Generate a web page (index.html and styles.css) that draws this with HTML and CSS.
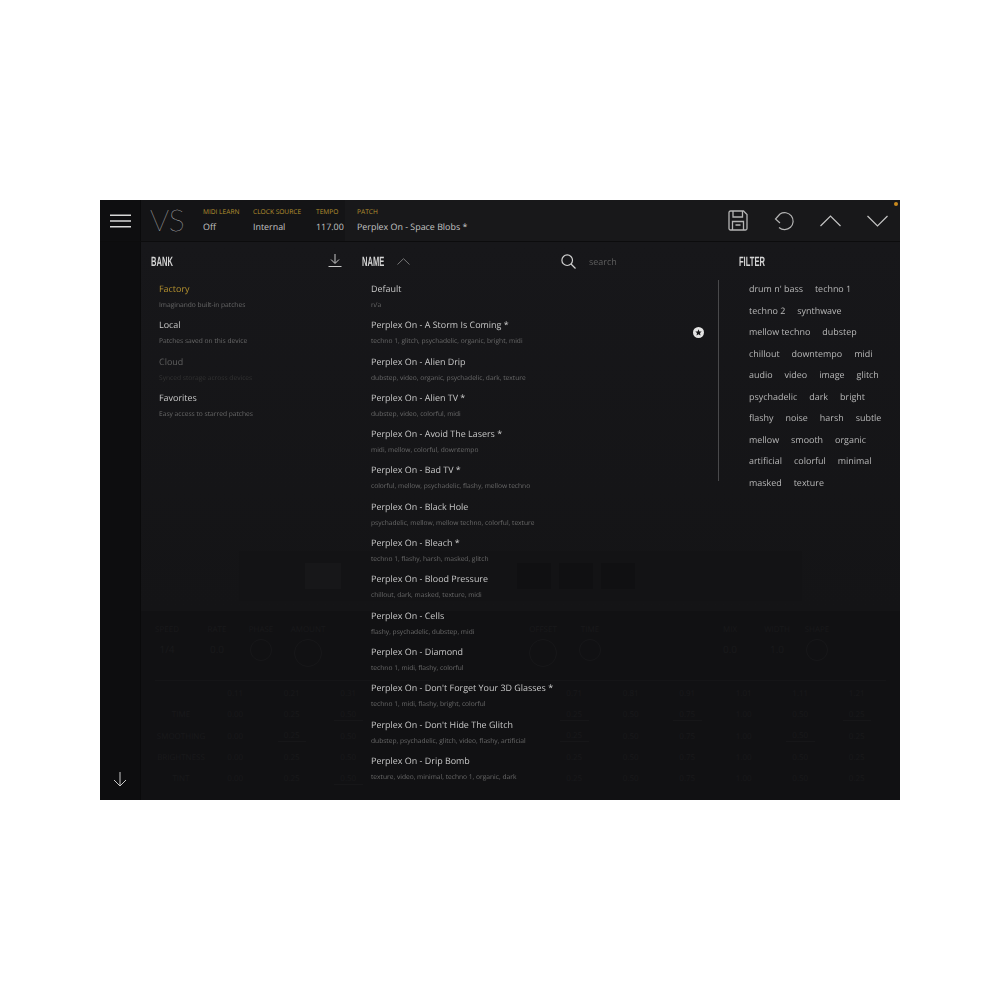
FILE: index.html
```html
<!DOCTYPE html>
<html lang="en">
<head>
    <meta charset="UTF-8">
    <title>VS Patch Browser</title>
    <link rel="stylesheet" href="styles.css">
</head>

<body>
    <div class="app">
        <header class="topbar">
            <div class="menu-btn">
                <svg width="21" height="14" viewBox="0 0 21 14"><path d="M0 1.200H21M0 7H21M0 12.800H21" stroke="#d8d8d8" stroke-width="1.500" fill="none"/></svg>
            </div>
            <div class="logo">VS</div>
            <div class="field field-midi"><span class="field-label">MIDI LEARN</span><span class="field-value">Off</span></div>
            <div class="field field-clock"><span class="field-label">CLOCK SOURCE</span><span class="field-value">Internal</span></div>
            <div class="field field-tempo"><span class="field-label">TEMPO</span><span class="field-value">117.00</span></div>
            <div class="field field-patch"><span class="field-label">PATCH</span><span class="field-value">Perplex On - Space Blobs *</span></div>
            <div class="actions">
                <svg width="20" height="21" viewBox="0 0 20 21" fill="none" stroke="#b4b4b4" stroke-width="1.300"><path d="M2.500 1H15.500L19 4.500V18.500A1.500 1.500 0 0 1 17.500 20H2.500A1.500 1.500 0 0 1 1 18.500V2.500A1.500 1.500 0 0 1 2.500 1Z"/><path d="M5 1V7H14.500V1M4.500 20V11.500H15.500V20M7.500 15H12.500"/></svg>
                <svg width="20" height="20" viewBox="0 0 20 20" fill="none" stroke="#b4b4b4" stroke-width="1.200"><path d="M6 3A8.500 8.500 0 1 1 5 16.500M6 3L1.500 8L6 12"/></svg>
                <svg width="21" height="12" viewBox="0 0 21 12" fill="none" stroke="#c4c4c4" stroke-width="1.200"><path d="M.5 11L10.500 1L20.500 11"/></svg>
                <svg width="21" height="12" viewBox="0 0 21 12" fill="none" stroke="#c4c4c4" stroke-width="1.200"><path d="M.5 1L10.500 11L20.500 1"/></svg>
            </div>
            <span class="status-dot"></span>
        </header>

        <div class="content">
            <aside class="sidebar">
                <svg width="14" height="15" viewBox="0 0 14 15" fill="none" stroke="#c8c8c8" stroke-width="1"><path d="M7 0V14M1 8L7 14L13 8"/></svg>
            </aside>

            <!-- the editor behind the browser, barely showing through -->
            <div class="ghost">
                <div class="ghost-top">
                    <div class="ghost-toolbar">
                        <span class="ghost-box"></span><span class="ghost-box wide"></span><span class="ghost-box"></span>
                        <span class="ghost-box"></span><span class="ghost-box"></span><span class="ghost-box"></span>
                        <span class="ghost-box dark"></span><span class="ghost-box dark"></span>
                        <span class="ghost-box dark"></span><span class="ghost-box"></span>
                    </div>
                </div>
                <div class="ghost-bottom">
                    <div class="ghost-knobs">
                        <div class="ghost-knob"><span>SPEED</span><b>1/4</b></div>
                        <div class="ghost-knob"><span>RATE</span><b>0.0</b></div>
                        <div class="ghost-knob"><span>PHASE</span><i></i></div>
                        <div class="ghost-knob"><span>AMOUNT</span><i class="big"></i></div>
                        <div class="ghost-knob"><span>OFFSET</span><i class="big"></i></div>
                        <div class="ghost-knob"><span>TIME</span><i></i></div>
                        <div class="ghost-knob"><span>MIX</span><b>0.0</b></div>
                        <div class="ghost-knob"><span>WIDTH</span><b>1.0</b></div>
                        <div class="ghost-knob"><span>SHAPE</span><i></i></div>
                    </div>
                    <div class="ghost-table">
                        <span></span><span>0.11</span><span>0.21</span><span>0.31</span><span></span><span></span><span></span><span>0.71</span><span>0.81</span><span>0.91</span><span>1.01</span><span>1.11</span><span>1.21</span>
                        <span>TIME</span><span>0.00</span><span>0.25</span><span class="m">0.50</span><span></span><span></span><span></span><span class="m">0.25</span><span>0.50</span><span class="m">0.75</span><span>1.00</span><span>0.50</span><span class="m">0.25</span>
                        <span>SMOOTHING</span><span>0.00</span><span class="m">0.25</span><span>0.50</span><span></span><span></span><span></span><span class="m">0.25</span><span>0.50</span><span>0.75</span><span>1.00</span><span class="m">0.50</span><span>0.25</span>
                        <span>BRIGHTNESS</span><span>0.00</span><span>0.25</span><span>0.50</span><span></span><span></span><span></span><span>0.25</span><span>0.50</span><span>0.75</span><span>1.00</span><span>0.50</span><span>0.25</span>
                        <span>TINT</span><span>0.00</span><span>0.25</span><span class="m">0.50</span><span></span><span></span><span></span><span>0.25</span><span>0.50</span><span>0.75</span><span>1.00</span><span>0.50</span><span>0.25</span>
                    </div>
                </div>
            </div>

            <div class="browser">
                <section class="col-bank">
                    <div class="col-head">
                        <h2>BANK</h2>
                        <svg class="download" width="14" height="14" viewBox="0 0 14 14" fill="none" stroke="#c8c8c8" stroke-width="1"><path d="M7 0V9M3 5.500L7 9.500L11 5.500M.5 12.500H13.500"/></svg>
                    </div>
                    <ul class="list">
                        <li><span class="title active">Factory</span><span class="sub">Imaginando built-in patches</span></li>
                        <li><span class="title">Local</span><span class="sub">Patches saved on this device</span></li>
                        <li class="disabled"><span class="title">Cloud</span><span class="sub">Synced storage across devices</span></li>
                        <li><span class="title">Favorites</span><span class="sub">Easy access to starred patches</span></li>
                    </ul>
                </section>

                <section class="col-name">
                    <div class="col-head">
                        <h2>NAME</h2>
                        <svg class="sort" width="13" height="7" viewBox="0 0 13 7" fill="none" stroke="#777" stroke-width="1"><path d="M.5 6.500L6.500 .7L12.500 6.500"/></svg>
                        <svg class="search-icon" width="15" height="15" viewBox="0 0 15 15" fill="none" stroke="#d0d0d0" stroke-width="1.200"><circle cx="6.200" cy="6.200" r="5.300"/><path d="M10 10L14.500 14.500"/></svg>
                        <span class="search">search</span>
                    </div>
                    <ul class="list">
                        <li><span class="title">Default</span><span class="sub">n/a</span></li>
                        <li class="starred">
                            <span class="title">Perplex On - A Storm Is Coming *</span><span class="sub">techno 1, glitch, psychadelic, organic, bright, midi</span>
                            <svg class="star" width="11" height="11" viewBox="0 0 11 11"><circle cx="5.500" cy="5.500" r="5.500" fill="#e4e4e4"/><path d="M5.500 2.200L6.400 4.400L8.700 4.600L7 6.100L7.500 8.400L5.500 7.200L3.500 8.400L4 6.100L2.300 4.600L4.600 4.400Z" fill="#17171a"/></svg>
                        </li>
                        <li><span class="title">Perplex On - Alien Drip</span><span class="sub">dubstep, video, organic, psychadelic, dark, texture</span></li>
                        <li><span class="title">Perplex On - Alien TV *</span><span class="sub">dubstep, video, colorful, midi</span></li>
                        <li><span class="title">Perplex On - Avoid The Lasers *</span><span class="sub">midi, mellow, colorful, downtempo</span></li>
                        <li><span class="title">Perplex On - Bad TV *</span><span class="sub">colorful, mellow, psychadelic, flashy, mellow techno</span></li>
                        <li><span class="title">Perplex On - Black Hole</span><span class="sub">psychadelic, mellow, mellow techno, colorful, texture</span></li>
                        <li><span class="title">Perplex On - Bleach *</span><span class="sub">techno 1, flashy, harsh, masked, glitch</span></li>
                        <li><span class="title">Perplex On - Blood Pressure</span><span class="sub">chillout, dark, masked, texture, midi</span></li>
                        <li><span class="title">Perplex On - Cells</span><span class="sub">flashy, psychadelic, dubstep, midi</span></li>
                        <li><span class="title">Perplex On - Diamond</span><span class="sub">techno 1, midi, flashy, colorful</span></li>
                        <li><span class="title">Perplex On - Don't Forget Your 3D Glasses *</span><span class="sub">techno 1, midi, flashy, bright, colorful</span></li>
                        <li><span class="title">Perplex On - Don't Hide The Glitch</span><span class="sub">dubstep, psychadelic, glitch, video, flashy, artificial</span></li>
                        <li><span class="title">Perplex On - Drip Bomb</span><span class="sub">texture, video, minimal, techno 1, organic, dark</span></li>
                    </ul>
                </section>

                <section class="col-filter">
                    <div class="col-head"><h2>FILTER</h2></div>
                    <div class="tags">
                        <div class="tag-row"><span>drum n' bass</span><span>techno 1</span></div>
                        <div class="tag-row"><span>techno 2</span><span>synthwave</span></div>
                        <div class="tag-row"><span>mellow techno</span><span>dubstep</span></div>
                        <div class="tag-row"><span>chillout</span><span>downtempo</span><span>midi</span></div>
                        <div class="tag-row"><span>audio</span><span>video</span><span>image</span><span>glitch</span></div>
                        <div class="tag-row"><span>psychadelic</span><span>dark</span><span>bright</span></div>
                        <div class="tag-row"><span>flashy</span><span>noise</span><span>harsh</span><span>subtle</span></div>
                        <div class="tag-row"><span>mellow</span><span>smooth</span><span>organic</span></div>
                        <div class="tag-row"><span>artificial</span><span>colorful</span><span>minimal</span></div>
                        <div class="tag-row"><span>masked</span><span>texture</span></div>
                    </div>
                </section>
            </div>
        </div>
    </div>
</body>
</html>
```

FILE: styles.css
```css
body {
    margin: 0;
    background: #fff;
    font-family: "Open Sans", sans-serif;
    color: #c8c8c8;
    text-rendering: geometricPrecision;
}
.app {
    width: 800px;
    height: 600px;
    margin: 200px 0 0 100px;
    background: #121214;
    display: flex;
    flex-direction: column;
    overflow: hidden;
}

/* top bar */
.topbar {
    position: relative;
    height: 41px;
    flex: none;
    display: flex;
    align-items: stretch;
    background: #141416;
    border-bottom: 1px solid #0c0c0d;
}
.menu-btn {
    width: 41px;
    flex: none;
    display: flex;
    align-items: center;
    justify-content: center;
    background: #0e0e10;
    border-right: 1px solid #0a0a0b;
    box-sizing: border-box;
    padding-left: 1px;
}
.logo {
    width: 62px;
    padding-left: 9px;
    box-sizing: border-box;
    flex: none;
    font-family: Lato, sans-serif;
    font-weight: 100;
    font-size: 30px;
    line-height: 41px;
    color: #e0e0e0;
}
.field {
    display: flex;
    flex-direction: column;
    flex: none;
    padding-top: 7px;
    box-sizing: border-box;
}
.field-label {
    font-size: 6.600px;
    line-height: 10px;
    color: #b5922f;
    white-space: nowrap;
}
.field-value {
    font-size: 8.900px;
    line-height: 14px;
    margin-top: 3px;
    color: #c4c4c4;
    white-space: nowrap;
}
.field-midi { width: 50px; }
.field-clock { width: 63px; }
.field-tempo { width: 29px; }
.field-patch {
    flex: 1;
    padding-left: 12px;
    background: #18181a;
}
.actions {
    position: absolute;
    right: 12px;
    top: 0;
    height: 41px;
    display: flex;
    align-items: center;
    gap: 26px;
}
.status-dot {
    position: absolute;
    right: 2px;
    top: 2px;
    width: 4px;
    height: 4px;
    border-radius: 50%;
    background: #c98a1e;
}

/* main area */
.content {
    position: relative;
    flex: 1;
    display: flex;
    min-height: 0;
}
.sidebar {
    width: 41px;
    flex: none;
    box-sizing: border-box;
    background: #0d0d0f;
    border-right: 1px solid #0a0a0b;
    display: flex;
    align-items: flex-end;
    justify-content: center;
    padding-bottom: 13px;
}

/* faint editor behind */
.ghost {
    flex: 1;
    display: flex;
    flex-direction: column;
}
.ghost-top {
    height: 369px;
    flex: none;
    box-sizing: border-box;
    background: linear-gradient(#17171a, #141416);
    padding: 309px 98px 10px 98px;
}
.ghost-toolbar {
    height: 50px;
    display: flex;
    align-items: center;
    gap: 8px;
    padding: 0 24px;
    background: #131315;
}
.ghost-box {
    width: 34px;
    height: 26px;
    background: #131315;
}
.ghost-box.wide { width: 36px; background: #171719; }
.ghost-box.dark { background: #101012; }
.ghost-bottom {
    flex: 1;
    background: #111113;
    color: #19191b;
    font-size: 8px;
    padding: 13px 14px 0 14px;
}
.ghost-knobs {
    display: flex;
    height: 56px;
    border-bottom: 1px solid #151517;
}
.ghost-knob {
    display: flex;
    flex-direction: column;
    align-items: center;
    gap: 4px;
    width: 34px;
    flex: none;
}
.ghost-knob:nth-child(1) { margin-left: -5px; }
.ghost-knob:nth-child(2) { margin-left: 16px; }
.ghost-knob:nth-child(3) { margin-left: 10px; }
.ghost-knob:nth-child(4) { margin-left: 13px; }
.ghost-knob:nth-child(5) { margin-left: 201px; }
.ghost-knob:nth-child(6) { margin-left: 13px; }
.ghost-knob:nth-child(7) { margin-left: 106px; }
.ghost-knob:nth-child(8) { margin-left: 13px; }
.ghost-knob:nth-child(9) { margin-left: 6px; }
.ghost-knob b { font-weight: 400; font-size: 10px; margin-top: 3px; }
.ghost-knob i {
    width: 20px;
    height: 20px;
    border: 1px solid #171719;
    border-radius: 50%;
}
.ghost-knob i.big { width: 26px; height: 26px; }
.ghost-table {
    display: grid;
    grid-template-columns: 52px repeat(12, 56.500px);
    grid-auto-rows: 21.300px;
    align-items: center;
    text-align: center;
    padding-top: 2px;
}
.ghost-table .m {
    border-bottom: 1px solid #161618;
    margin: 0 14px;
}

/* browser overlay */
.browser {
    position: absolute;
    left: 41px;
    top: 0;
    right: 0;
    bottom: 0;
    display: flex;
    font-size: 8.950px;
    will-change: transform;
}
.col-head {
    height: 38px;
    display: flex;
    align-items: center;
}
/* no condensed family installed, so the headings are squeezed */
.col-head h2 {
    margin: 0;
    width: 24px;
    font-family: "Liberation Sans", sans-serif;
    font-weight: 700;
    font-size: 13.500px;
    white-space: nowrap;
    color: #d4d4d4;
    transform: scaleX(.56);
    transform-origin: left center;
}
.col-bank {
    width: 221px;
    flex: none;
}
.col-bank .col-head {
    padding-left: 10px;
    padding-right: 20px;
    justify-content: space-between;
}
.col-bank .list { padding-left: 18px; }
.col-name {
    width: 356px;
    flex: none;
}
.col-name .list { padding-left: 9px; }
.sort { margin-left: 11px; }
.search-icon { margin-left: 151px; }
.search {
    margin-left: 13px;
    color: #5e5e5e;
    font-size: 9px;
}
.list {
    list-style: none;
    margin: 0;
    padding: 0;
}
.list li {
    position: relative;
    height: 36.300px;
    box-sizing: border-box;
    padding-top: 1px;
}
.title {
    display: block;
    line-height: 16px;
    color: #c8c8c8;
    white-space: nowrap;
}
.title.active { color: #b5922f; }
.sub {
    display: block;
    font-size: 6.650px;
    line-height: 16px;
    color: #6a6a6a;
    white-space: nowrap;
}
.disabled .title { color: #5e5e5e; }
.disabled .sub { color: #333; }
.star {
    position: absolute;
    left: 322px;
    top: 11px;
}
.col-filter {
    flex: 1;
    min-width: 0;
}
.col-filter .col-head { padding-left: 21px; }
.tags {
    padding-left: 31px;
    position: relative;
}
.tags::before {
    content: "";
    position: absolute;
    left: 0;
    top: 0;
    width: 1px;
    height: 201px;
    background: #49494b;
}
.tag-row {
    display: flex;
    gap: 12px;
    height: 21.500px;
    box-sizing: border-box;
    line-height: 17px;
    white-space: nowrap;
    color: #b8b8b8;
}
```
